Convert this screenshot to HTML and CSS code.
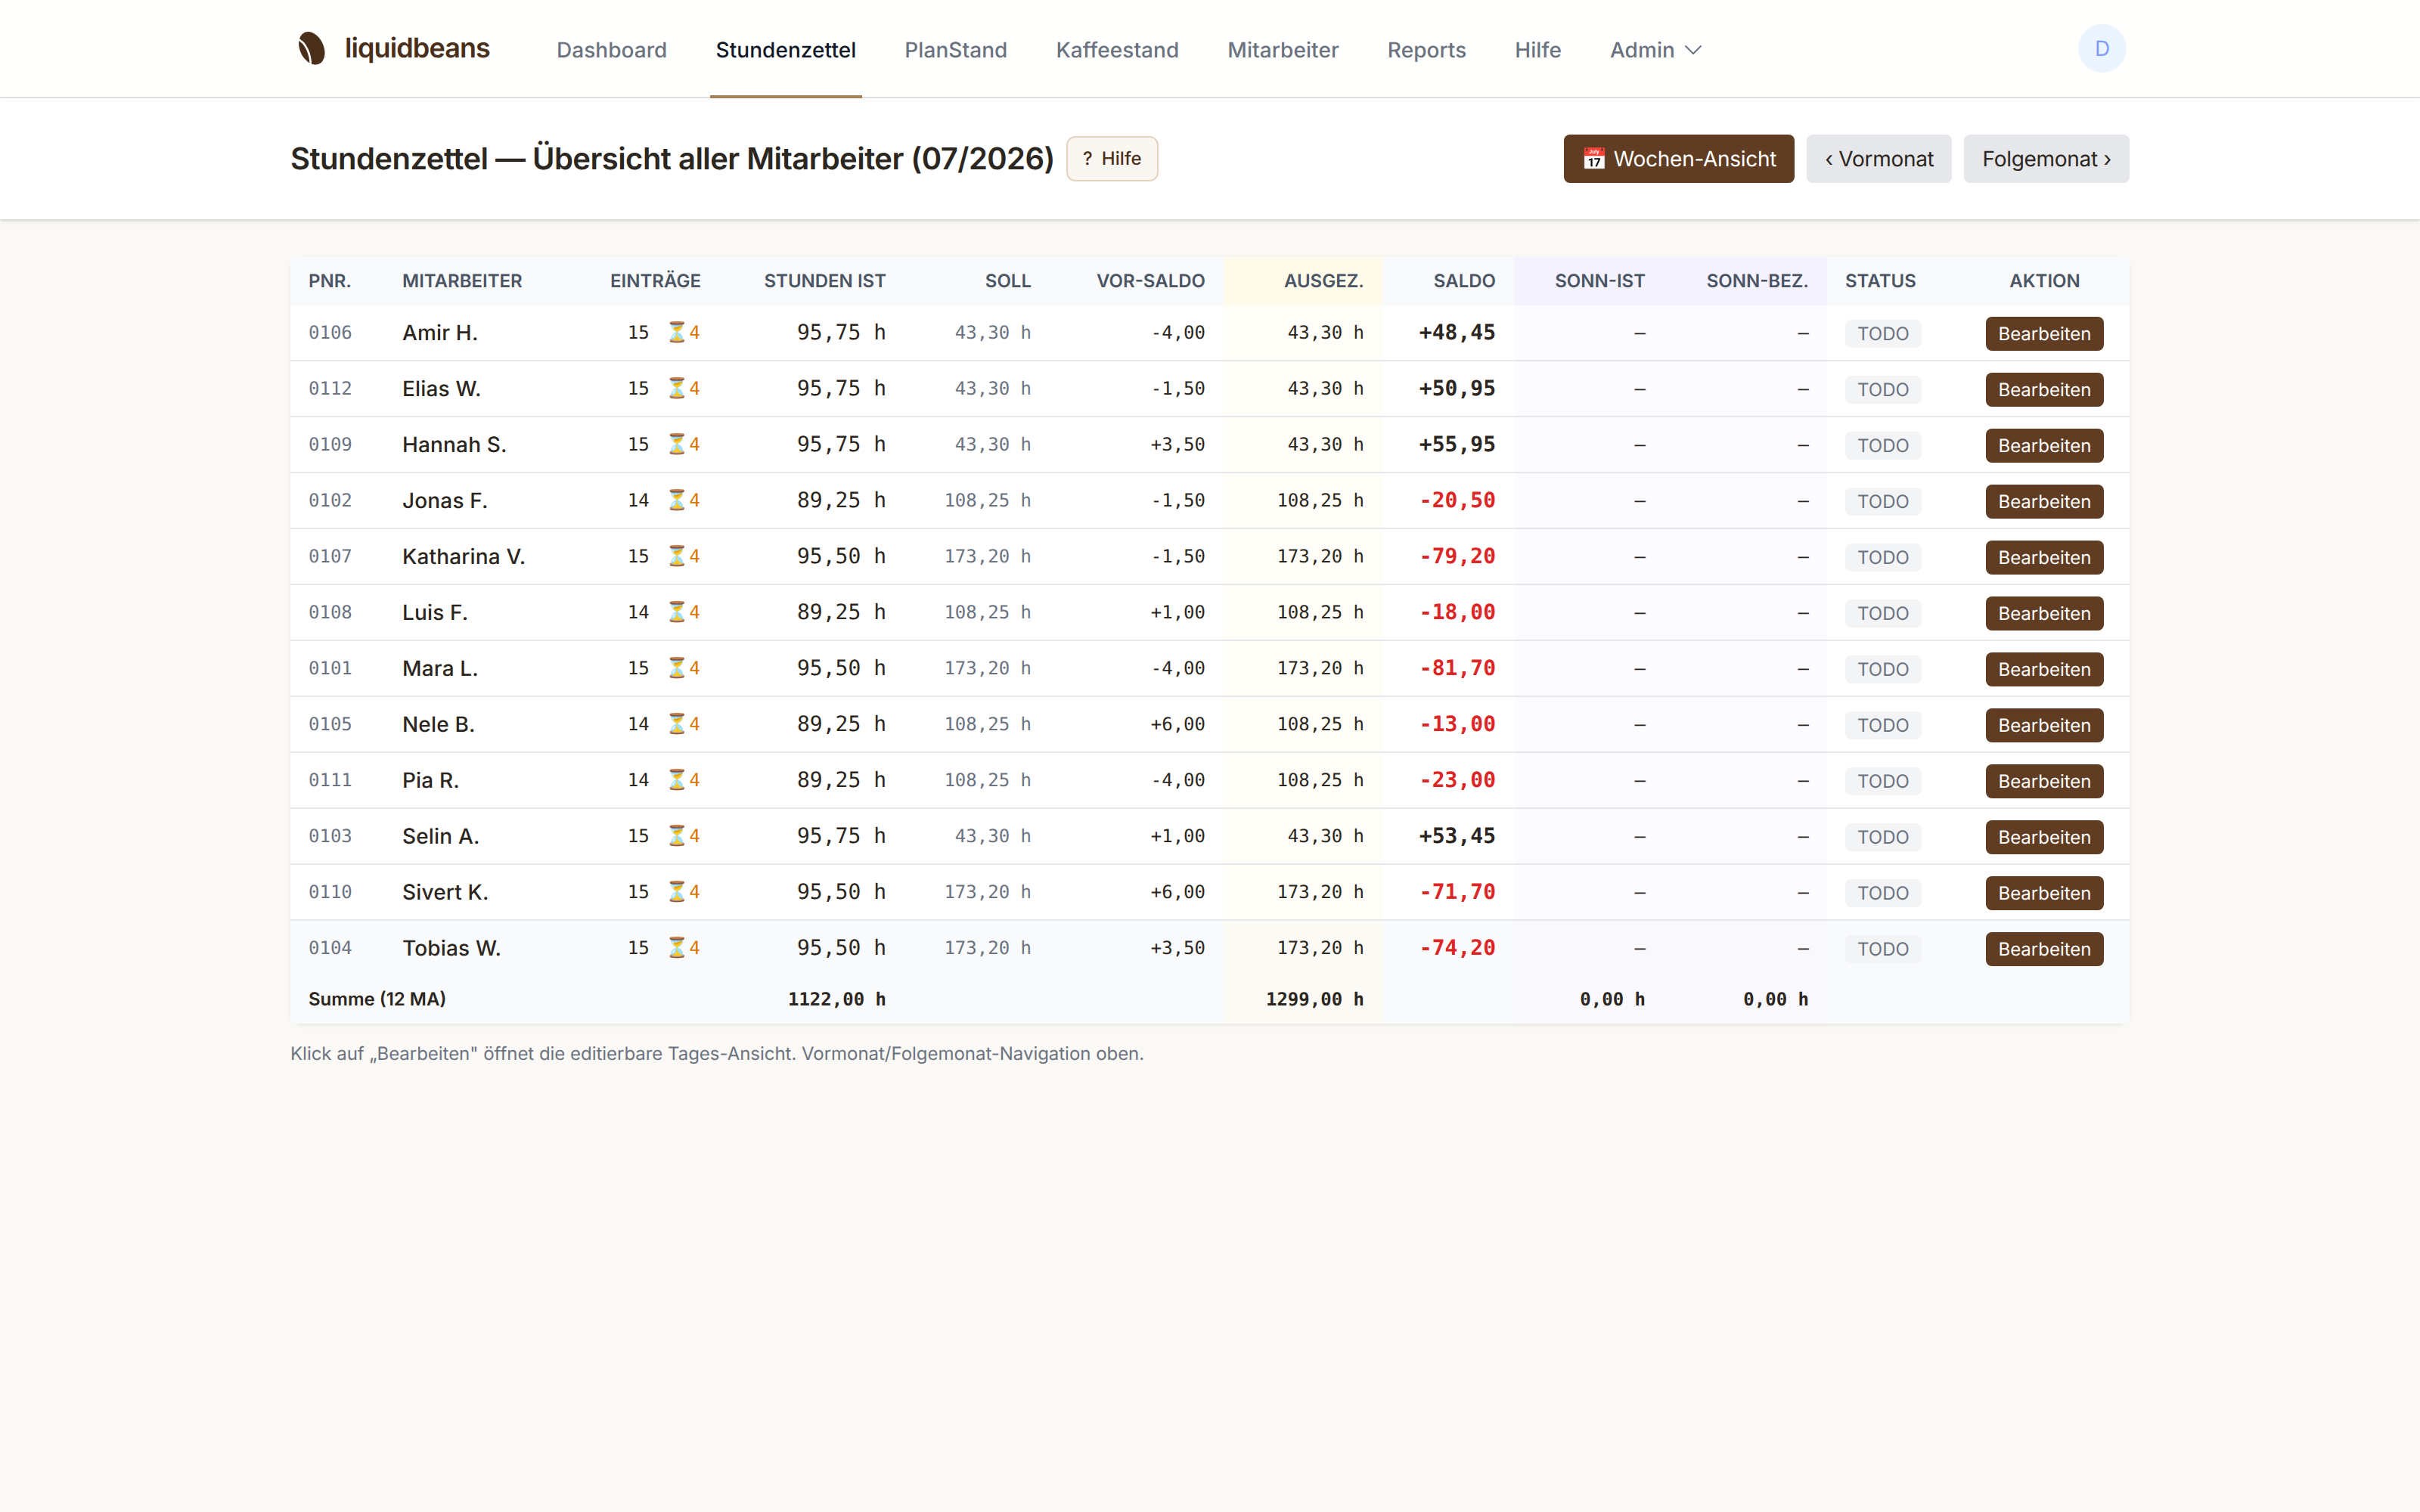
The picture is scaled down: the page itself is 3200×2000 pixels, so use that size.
FILE: index.html
```html
<!DOCTYPE html>
<html lang="de">
<head>
    <meta charset="UTF-8">
    <meta name="viewport" content="width=device-width, initial-scale=1.0">
    <title>Stundenzettel — liquidbeans</title>
    <link rel="stylesheet" href="styles.css">
</head>
<body>
    <!-- Navigation -->
    <nav class="navbar">
        <div class="container navbar-inner">
            <a class="brand" href="#">
                <svg class="brand-icon" viewBox="0 0 56 56">
                    <ellipse cx="28.3" cy="27.8" rx="15.7" ry="22.9" transform="rotate(-25 28.3 27.8)" fill="#4a2f1b"/>
                    <path d="M9.5 15.5 C20 20 27 35 26.8 51" fill="none" stroke="#fffffd" stroke-width="2.6"/>
                </svg>
                <span>liquidbeans</span>
            </a>
            <div class="nav-links">
                <a href="#">Dashboard</a>
                <a href="#" class="active">Stundenzettel</a>
                <a href="#">PlanStand</a>
                <a href="#">Kaffeestand</a>
                <a href="#">Mitarbeiter</a>
                <a href="#">Reports</a>
                <a href="#">Hilfe</a>
                <a href="#">Admin
                    <svg class="chevron" viewBox="0 0 24 24"><path d="m19.5 8.25-7.5 7.5-7.5-7.5" fill="none" stroke="currentColor" stroke-width="1.5" stroke-linecap="round" stroke-linejoin="round"/></svg>
                </a>
            </div>
            <div class="avatar">D</div>
        </div>
    </nav>

    <!-- Seitenkopf -->
    <header class="page-header">
        <div class="container page-header-inner">
            <h1>Stundenzettel — Übersicht aller Mitarbeiter (07/2026)</h1>
            <a class="help" href="#"><span>?</span><span>Hilfe</span></a>
            <div class="actions">
                <a class="btn btn-primary" href="#">📅 Wochen-Ansicht</a>
                <a class="btn" href="#">‹ Vormonat</a>
                <a class="btn" href="#">Folgemonat ›</a>
            </div>
        </div>
    </header>

    <main class="container">
        <table id="hoursTable">
            <colgroup>
                <col class="w-pnr"><col class="w-name"><col class="w-entries"><col class="w-actual">
                <col class="w-target"><col class="w-carry"><col class="w-paid"><col class="w-balance">
                <col class="w-sun"><col class="w-sunpaid"><col class="w-status"><col class="w-action">
            </colgroup>
            <thead>
                <tr>
                    <th>PNr.</th>
                    <th>Mitarbeiter</th>
                    <th class="right">Einträge</th>
                    <th class="right">Stunden Ist</th>
                    <th class="right">Soll</th>
                    <th class="right">Vor-Saldo</th>
                    <th class="right paid">Ausgez.</th>
                    <th class="right">Saldo</th>
                    <th class="right sunday">Sonn-Ist</th>
                    <th class="right sunday">Sonn-Bez.</th>
                    <th>Status</th>
                    <th class="center">Aktion</th>
                </tr>
            </thead>
            <tbody>
                <!-- Zeilen kommen aus dem Skript -->
            </tbody>
            <tfoot>
                <tr>
                    <td colspan="3">Summe (12 MA)</td>
                    <td class="right mono">1122,00 h</td>
                    <td></td>
                    <td></td>
                    <td class="right mono paid">1299,00 h</td>
                    <td></td>
                    <td class="right mono sunday">0,00 h</td>
                    <td class="right mono sunday">0,00 h</td>
                    <td></td>
                    <td></td>
                </tr>
            </tfoot>
        </table>
        <p class="hint">Klick auf „Bearbeiten" öffnet die editierbare Tages-Ansicht. Vormonat/Folgemonat-Navigation oben.</p>
    </main>

    <script>
        // PNr, Name, Einträge, Ist, Soll (= ausgezahlt), Vor-Saldo, Saldo
        const employees = [
            ["0106", "Amir H.", 15, "95,75", "43,30", "-4,00", "+48,45"],
            ["0112", "Elias W.", 15, "95,75", "43,30", "-1,50", "+50,95"],
            ["0109", "Hannah S.", 15, "95,75", "43,30", "+3,50", "+55,95"],
            ["0102", "Jonas F.", 14, "89,25", "108,25", "-1,50", "-20,50"],
            ["0107", "Katharina V.", 15, "95,50", "173,20", "-1,50", "-79,20"],
            ["0108", "Luis F.", 14, "89,25", "108,25", "+1,00", "-18,00"],
            ["0101", "Mara L.", 15, "95,50", "173,20", "-4,00", "-81,70"],
            ["0105", "Nele B.", 14, "89,25", "108,25", "+6,00", "-13,00"],
            ["0111", "Pia R.", 14, "89,25", "108,25", "-4,00", "-23,00"],
            ["0103", "Selin A.", 15, "95,75", "43,30", "+1,00", "+53,45"],
            ["0110", "Sivert K.", 15, "95,50", "173,20", "+6,00", "-71,70"],
            ["0104", "Tobias W.", 15, "95,50", "173,20", "+3,50", "-74,20"]
        ];

        const tbody = document.querySelector("#hoursTable tbody");
        employees.forEach(([pnr, name, entries, actual, target, carry, balance]) => {
            const row = document.createElement("tr");
            row.innerHTML = `
                <td class="mono small muted">${pnr}</td>
                <td class="name">${name}</td>
                <td class="right mono small">${entries} <span class="pending"><span class="hourglass">⏳</span>4</span></td>
                <td class="right mono">${actual} h</td>
                <td class="right mono small muted">${target} h</td>
                <td class="right mono small">${carry}</td>
                <td class="right mono small paid">${target} h</td>
                <td class="right mono balance ${balance[0] === "-" ? "negative" : ""}">${balance}</td>
                <td class="right mono small sunday">–</td>
                <td class="right mono small sunday">–</td>
                <td class="control"><span class="badge">TODO</span></td>
                <td class="control center"><a class="edit" href="#">Bearbeiten</a></td>
            `;
            tbody.appendChild(row);
        });
    </script>
</body>
</html>
```
FILE: styles.css
```css
* {
    box-sizing: border-box;
}
body {
    margin: 0;
    background-color: #fbf9f5;
    color: #2c2620;
    font-family: Inter, "Noto Sans", sans-serif;
    font-size: 28px;
    line-height: 40px;
    text-rendering: geometricPrecision;
}
a {
    color: inherit;
    text-decoration: none;
}
.container {
    width: 2432px;
    margin: 0 auto;
}

/* Navigation */
.navbar {
    background-color: #fffffd;
    border-bottom: 2px solid #e5e5e5;
}
.navbar-inner {
    display: flex;
    align-items: center;
    height: 128px;
}
.brand {
    display: flex;
    align-items: center;
    gap: 16px;
    color: #4a2f1b;
    font-size: 36px;
    font-weight: 600;
    letter-spacing: -0.9px;
}
.brand span {
    margin-top: -2px;
}
.brand-icon {
    width: 56px;
    height: 56px;
}
.nav-links {
    display: flex;
    align-self: stretch;
    gap: 48px;
    margin: 0 auto -2px 80px;
    letter-spacing: 0.06px;
}
.nav-links a {
    display: flex;
    align-items: center;
    padding: 6px 8px 0;
    border-bottom: 4px solid transparent;
    color: #6b7280;
    font-weight: 500;
}
.nav-links a.active {
    color: #111827;
    border-color: #a9825a;
}
.chevron {
    width: 32px;
    height: 32px;
    margin-left: 8px;
}
.avatar {
    width: 64px;
    height: 64px;
    margin-right: 4px;
    border-radius: 50%;
    background-color: #ebf4ff;
    color: #7f9cf5;
    line-height: 64px;
    text-align: center;
}

/* Seitenkopf */
.page-header {
    position: relative;
    background-color: #fff;
    box-shadow: 0 2px 6px rgba(44, 38, 32, 0.1), 0 2px 4px rgba(44, 38, 32, 0.1);
}
.page-header-inner {
    display: flex;
    align-items: center;
    height: 160px;
}
h1 {
    margin: 0;
    font-size: 40px;
    font-weight: 600;
    letter-spacing: -0.54px;
    line-height: 50px;
}
.help {
    display: flex;
    gap: 12px;
    height: 60px;
    margin-left: 15px;
    padding: 0 20px;
    border: 2px solid #e5d3c0;
    border-radius: 12px;
    background-color: #faf6f1;
    color: #4a2f1b;
    font-size: 24px;
    font-weight: 500;
    letter-spacing: 0.1px;
    line-height: 56px;
}
.actions {
    display: flex;
    gap: 16px;
    margin-left: auto;
    letter-spacing: -0.28px;
}
.btn {
    padding: 12px 24px;
    border-radius: 8px;
    background-color: #e5e7eb;
}
.btn-primary {
    background-color: #5f3c22;
    color: #fff;
}

/* Tabelle */
table {
    width: 100%;
    margin-top: 50px;
    table-layout: fixed;
    border-spacing: 0;
    border-radius: 16px;
    background-color: #fff;
    box-shadow: 0 2px 6px rgba(44, 38, 32, 0.06), 0 2px 4px rgba(44, 38, 32, 0.03);
}
.w-pnr { width: 124px; }
.w-name { width: 275px; }
.w-entries { width: 167px; }
.w-actual { width: 246px; }
.w-target { width: 192px; }
.w-carry { width: 230px; }
.w-paid { width: 210px; }
.w-balance { width: 174px; }
.w-sun { width: 198px; }
.w-sunpaid { width: 216px; }
.w-status { width: 176px; }
.w-action { width: 224px; }

th {
    padding: 16px 24px;
    background-color: #f9fafc;
    color: #4b5563;
    font-size: 24px;
    font-weight: 600;
    line-height: 32px;
    text-align: left;
    text-transform: uppercase;
    white-space: nowrap;
}
td {
    height: 74px;
    padding: 0 24px;
    border-bottom: 2px solid #e5e7eb;
    white-space: nowrap;
}
tbody tr:last-child td {
    height: 72px;
    border-bottom: 0;
}
tbody tr:last-child,
tfoot tr {
    background-color: #f9fafc;
}
tfoot td {
    height: 64px;
    border-bottom: 0;
    font-size: 24px;
    font-weight: 600;
    line-height: 32px;
}
.right {
    text-align: right;
}
.center {
    text-align: center;
}
.mono {
    font-family: "DejaVu Sans Mono", monospace;
}
.small {
    font-size: 24px;
    line-height: 32px;
}
.muted {
    color: #6b7280;
}
.name {
    font-weight: 500;
    letter-spacing: 0.16px;
}
.pending {
    margin-left: 6px;
    color: #d97706;
}
.hourglass {
    font-size: 26px;
    line-height: 1;
}
.balance {
    font-weight: 700;
}
.negative {
    color: #dc2626;
}
td.paid {
    background-color: rgba(255, 251, 235, 0.4);
}
th.paid {
    background-color: #fffbeb;
}
td.sunday {
    background-color: rgba(245, 243, 255, 0.35);
}
th.sunday {
    background-color: #f5f3ff;
}
td.control {
    padding-top: 2px;
}
.badge,
.edit {
    padding: 4px 16px;
    border-radius: 8px;
    background-color: #f3f4f6;
    color: #6b7280;
    font-size: 24px;
}
.edit {
    padding: 8px 16px;
    background-color: #5f3c22;
    color: #fff;
}
.hint {
    margin: 24px 0;
    color: #6b7280;
    font-size: 24px;
    letter-spacing: -0.03px;
    line-height: 32px;
}
```
